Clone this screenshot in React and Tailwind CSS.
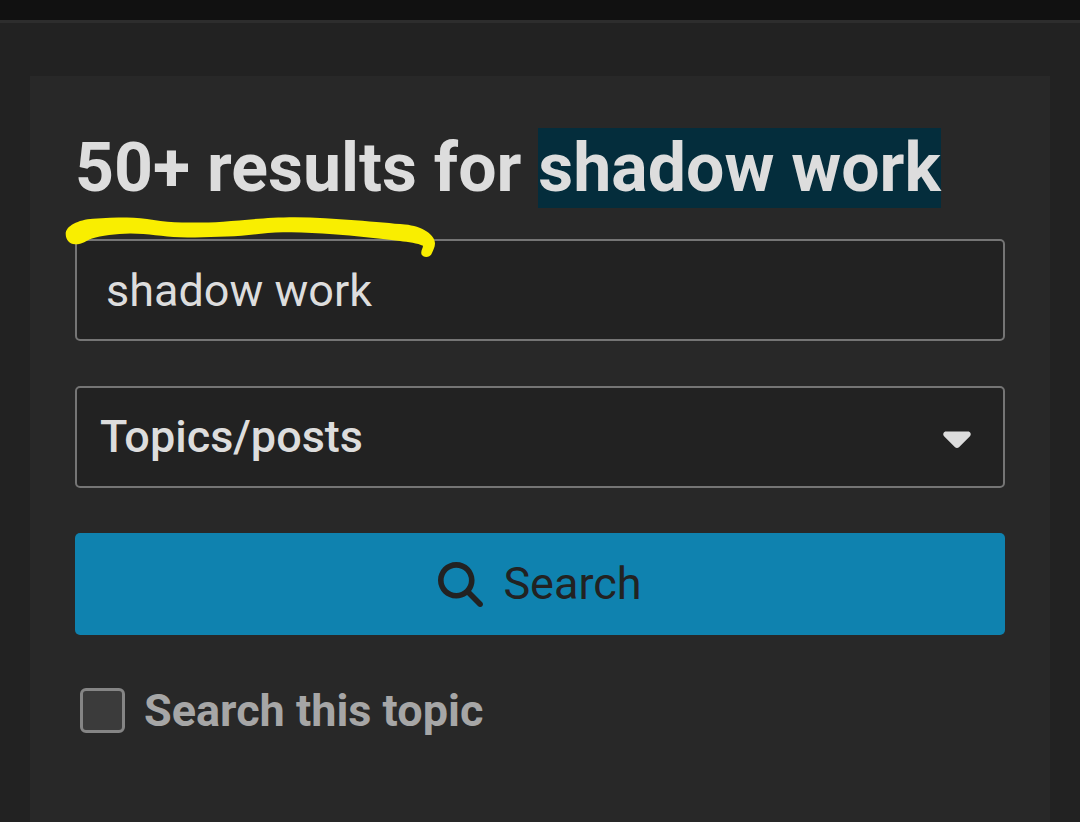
import { useState } from "react";
import { FaCaretDown, FaMagnifyingGlass } from "react-icons/fa6";

const fieldStyle =
  "block w-full h-[102px] rounded-[5px] border-2 border-[#757575] bg-[#222222] text-[#dddddd] text-[45px]";

const Underline = () => (
  <svg
    className="absolute -left-2.5 top-[88px] w-[372px] h-11 pointer-events-none"
    viewBox="65 216 372 44"
    fill="#f9ee00"
    aria-hidden="true"
  >
    <path d="M65.7 234C65.700 226 78 219.800 93 218.800C105 218 115 217.500 127 217.500C145 217.700 162 222.300 182 222.500C197 222.700 210 222.600 223 221.700C245 220 265 217.500 295 217.300C315 217.300 335 219 355 220.300C375 221.800 393 223.600 405 224.500C422 226 435 234.500 435 243.500C435 247 433 250.500 431.500 254C429 259 420.500 257.500 421.300 252C421.500 249.500 423 248 423 245.800C418 243 408 242 400 240.900C377 238.500 355 235.500 333 234.200C316 233 300 231.800 283 232.300C262 233 245 235.800 227 236.600C210 237.400 195 237.600 180 237.200C162 236.500 148 233.300 130 233.400C116 233.600 101 235.500 92 238.500C86 240.500 83 244.300 75 244.300C69.500 244.300 65.700 239.500 65.700 234Z" />
  </svg>
);

const SearchForm = () => {
  const [term, setTerm] = useState("shadow work");
  const [type, setType] = useState("topics");
  const [thisTopic, setThisTopic] = useState(false);

  return (
    <form onSubmit={(e) => e.preventDefault()}>
      <input
        type="text"
        aria-label="Search term"
        value={term}
        onChange={(e) => setTerm(e.target.value)}
        className={`${fieldStyle} px-[29px]`}
      />

      <div className="relative mt-[45px]">
        <select
          aria-label="Search type"
          value={type}
          onChange={(e) => setType(e.target.value)}
          className={`${fieldStyle} appearance-none pl-[23px] pr-20 font-medium`}
        >
          <option value="topics">Topics/posts</option>
        </select>
        <FaCaretDown className="absolute right-[34px] inset-y-0 my-auto w-7 h-11 text-[#dddddd] pointer-events-none" />
      </div>

      <button
        type="submit"
        className="mt-[45px] flex w-full h-[102px] items-center justify-center gap-5 rounded-[5px] bg-[#0f82af] text-[45px] text-[#222222]"
      >
        <FaMagnifyingGlass className="size-[45px]" />
        Search
      </button>

      <label className="mt-12 ml-[5px] flex items-center gap-[19px] text-[45px] leading-[55px] font-bold text-[#a6a6a6]">
        <input
          type="checkbox"
          checked={thisTopic}
          onChange={(e) => setThisTopic(e.target.checked)}
          className="appearance-none size-[45px] shrink-0 rounded-md border-3 border-[#858585] bg-[#3b3b3b] checked:bg-[#0f82af]"
        />
        Search this topic
      </label>
    </form>
  );
};

const App = () => {
  return (
    <div className="flex min-h-screen flex-col bg-[#222222] font-['Roboto',sans-serif]">
      <header className="h-[23px] border-b-3 border-[#2d2d2d] bg-[#111111]" />

      <main className="flex grow flex-col px-[30px] pt-[53px]">
        <section className="grow bg-[#282828] px-[45px] pt-[52px] pb-10">
          <h1 className="relative z-10 mb-[31px] text-[68px] leading-[80px] font-bold text-[#dddddd]">
            50+ results for{" "}
            <mark className="bg-[#042d3c] text-[#dddddd]">shadow work</mark>
            <Underline />
          </h1>
          <SearchForm />
        </section>
      </main>
    </div>
  );
};

export default App;
